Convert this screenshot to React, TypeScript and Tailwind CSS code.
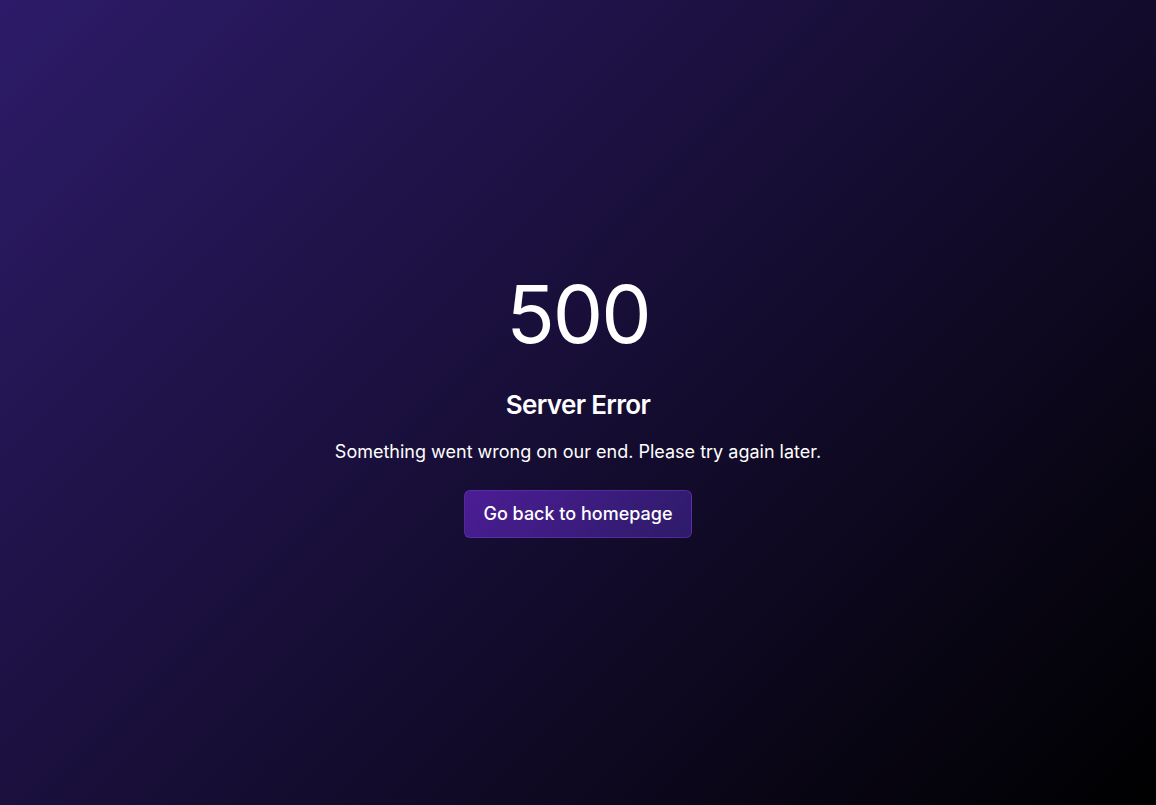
export default function App() {
  return (
    <div
      className="min-h-screen w-full flex items-center justify-center pt-[6px] bg-[linear-gradient(135deg,#2d1b69_0%,#000000_100%)] text-white"
      style={{ fontFamily: 'Inter, "Noto Sans", sans-serif' }}
    >
      <div className="flex flex-col items-center text-center">
        <h1 className="text-[80px] leading-none font-normal tracking-tight">500</h1>
        <h2 className="mt-[35px] text-[26px] leading-8 font-semibold tracking-tight">Server Error</h2>
        <p className="mt-[17px] text-lg">Something went wrong on our end. Please try again later.</p>
        <a
          href="#"
          className="mt-6 px-[18px] py-[9px] rounded-md border border-[#6d3bbf]/50 bg-[linear-gradient(135deg,#4c1d95_0%,#2d1b69_100%)] text-lg font-medium"
        >
          Go back to homepage
        </a>
      </div>
    </div>
  );
}
